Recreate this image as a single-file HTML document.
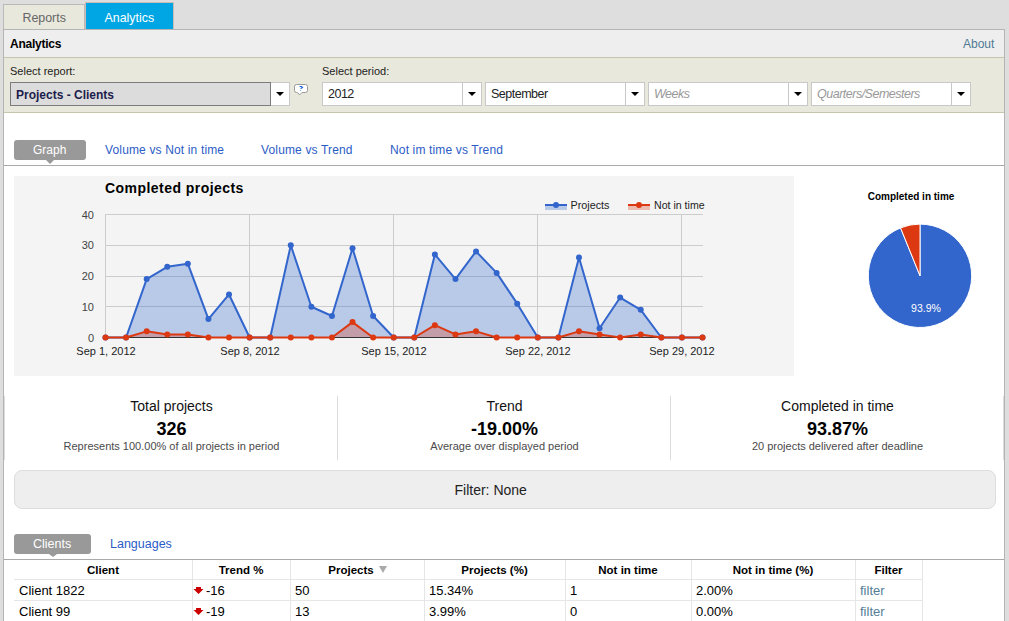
<!DOCTYPE html>
<html><head><meta charset="utf-8">
<style>
html,body{margin:0;padding:0;}
body{width:1009px;height:621px;overflow:hidden;background:#dedede;position:relative;font-family:"Liberation Sans",sans-serif;}
.abs{position:absolute;}
.t{position:absolute;white-space:nowrap;line-height:1;}
</style></head><body>
<!-- tabs -->
<div class="abs" style="left:3px;top:4px;width:80px;height:25px;background:#e8e8dc;border:1px solid #b9b9b9;border-bottom:none;"></div>
<div class="t" style="left:22.5px;top:12px;font-size:12.4px;color:#666;">Reports</div>
<div class="abs" style="left:85px;top:2px;width:87px;height:27px;background:#00a6e3;border:1px solid #cbbcb8;border-bottom:none;"></div>
<div class="t" style="left:104.5px;top:12px;font-size:12.4px;color:#fff;">Analytics</div>
<!-- container -->
<div class="abs" style="left:3px;top:29px;width:1000px;height:600px;background:#fff;border:1px solid #b4b4b4;"></div>
<div class="abs" style="left:4px;top:30px;width:1000px;height:27px;background:#eeeeee;border-bottom:1px solid #c6c6ac;"></div>
<div class="t" style="left:10px;top:38px;font-size:12px;letter-spacing:-0.25px;font-weight:bold;color:#000;">Analytics</div>
<div class="t" style="left:963px;top:38px;font-size:12px;color:#4f7a93;">About</div>
<div class="abs" style="left:4px;top:58px;width:1000px;height:54px;background:#e8e8dc;border-bottom:1px solid #c6c6ac;"></div>
<div class="t" style="left:10px;top:66px;font-size:11px;color:#222;">Select report:</div>
<div class="t" style="left:322px;top:66px;font-size:11px;color:#222;">Select period:</div>
<!-- select report -->
<div class="abs" style="left:10px;top:82px;width:259px;height:22px;background:#dcdcdc;border:1px solid #7c7c7c;"></div>
<div class="t" style="left:16px;top:89px;font-size:12px;font-weight:bold;color:#1c1c4c;">Projects - Clients</div>
<div class="abs" style="left:271px;top:82px;width:18px;height:22px;background:#fff;border:1px solid #c8c8c8;border-left:none;"></div>
<div class="abs" style="left:276px;top:92px;width:0;height:0;border-left:4px solid transparent;border-right:4px solid transparent;border-top:4px solid #000;"></div>
<svg class="abs" style="left:290px;top:80px" width="22" height="20" viewBox="0 0 22 20">
<path d="M6.5,4.5 H15.5 Q17.5,4.5 17.5,6.5 V10.5 Q17.5,12.5 15.5,12.5 H12 L9.5,15 L7.5,12.5 H6.5 Q4.5,12.5 4.5,10.5 V6.5 Q4.5,4.5 6.5,4.5 Z" fill="#fff" stroke="#999" stroke-width="1"/>
<path d="M9.5,6.5 H11.5 L12.5,7.5 L11,8.5 H10.5 M10.5,10.5 V11" stroke="#1a66d8" stroke-width="1.2" fill="none"/>
</svg>
<!-- period selects -->
<div class="abs" style="left:322px;top:82px;width:158px;height:22px;background:#fff;border:1px solid #c8c8c8;"></div><div class="abs" style="left:462px;top:83px;width:1px;height:22px;background:#c8c8c8;"></div><div class="abs" style="left:468px;top:92px;width:0;height:0;border-left:4px solid transparent;border-right:4px solid transparent;border-top:4px solid #000;"></div><div class="t" style="left:328px;top:87.5px;font-size:12.5px;letter-spacing:-0.5px;color:#222;">2012</div>
<div class="abs" style="left:485px;top:82px;width:158px;height:22px;background:#fff;border:1px solid #c8c8c8;"></div><div class="abs" style="left:625px;top:83px;width:1px;height:22px;background:#c8c8c8;"></div><div class="abs" style="left:631px;top:92px;width:0;height:0;border-left:4px solid transparent;border-right:4px solid transparent;border-top:4px solid #000;"></div><div class="t" style="left:491px;top:87.5px;font-size:12.5px;letter-spacing:-0.5px;color:#222;">September</div>
<div class="abs" style="left:648px;top:82px;width:158px;height:22px;background:#fff;border:1px solid #c8c8c8;"></div><div class="abs" style="left:788px;top:83px;width:1px;height:22px;background:#c8c8c8;"></div><div class="abs" style="left:794px;top:92px;width:0;height:0;border-left:4px solid transparent;border-right:4px solid transparent;border-top:4px solid #000;"></div><div class="t" style="left:654px;top:87.5px;font-size:12.5px;letter-spacing:-0.5px;color:#999;font-style:italic;">Weeks</div>
<div class="abs" style="left:811px;top:82px;width:158px;height:22px;background:#fff;border:1px solid #c8c8c8;"></div><div class="abs" style="left:951px;top:83px;width:1px;height:22px;background:#c8c8c8;"></div><div class="abs" style="left:957px;top:92px;width:0;height:0;border-left:4px solid transparent;border-right:4px solid transparent;border-top:4px solid #000;"></div><div class="t" style="left:817px;top:87.5px;font-size:12.5px;letter-spacing:-0.5px;color:#999;font-style:italic;">Quarters/Semesters</div>

<!-- graph tabs -->
<div class="abs" style="left:14px;top:140px;width:72px;height:20px;background:#999;border-radius:3px;"></div>
<div class="abs" style="left:46px;top:160px;width:0;height:0;border-left:4px solid transparent;border-right:4px solid transparent;border-top:4px solid #999;"></div>
<div class="t" style="left:33px;top:144px;font-size:12px;color:#fff;">Graph</div>
<div class="t" style="left:105px;top:144px;font-size:12px;letter-spacing:0.15px;color:#2b5cc6;">Volume vs Not in time</div>
<div class="t" style="left:261px;top:144px;font-size:12px;letter-spacing:0.15px;color:#2b5cc6;">Volume vs Trend</div>
<div class="t" style="left:390px;top:144px;font-size:12px;letter-spacing:0.15px;color:#2b5cc6;">Not im time vs Trend</div>
<div class="abs" style="left:4px;top:165px;width:1000px;height:1px;background:#aaaaaa;"></div>
<svg class="abs" style="left:0;top:0" width="1009" height="400" viewBox="0 0 1009 400">
<rect x="14" y="176" width="780" height="200" fill="#f4f4f4"/>
<g stroke="#cccccc" stroke-width="1" fill="none">
<path d="M105,214.5 H703 M105,245.5 H703 M105,276.5 H703 M105,306.5 H703"/>
<path d="M105.5,214 V338 M249.5,214 V338 M393.5,214 V338 M537.5,214 V338 M681.5,214 V338"/>
</g>
<path d="M105.5,337.5 L126.09,337.5 L146.67,279.07 L167.26,266.77 L187.84,263.7 L208.43,319.05 L229.02,294.45 L249.6,337.5 L270.19,337.5 L290.78,245.25 L311.36,306.75 L331.95,315.98 L352.53,248.32 L373.12,315.98 L393.71,337.5 L414.29,337.5 L434.88,254.47 L455.47,279.07 L476.05,251.4 L496.64,272.93 L517.22,303.68 L537.81,337.5 L558.4,337.5 L578.98,257.55 L599.57,328.27 L620.16,297.52 L640.74,309.82 L661.33,337.5 L681.91,337.5 L702.5,337.5 L702.5,337.5 L105.5,337.5 Z" fill="#3366cc" fill-opacity="0.3"/>
<path d="M105.5,337.5 L126.09,337.5 L146.67,331.35 L167.26,334.43 L187.84,334.43 L208.43,337.5 L229.02,337.5 L249.6,337.5 L270.19,337.5 L290.78,337.5 L311.36,337.5 L331.95,337.5 L352.53,322.12 L373.12,337.5 L393.71,337.5 L414.29,337.5 L434.88,325.2 L455.47,334.43 L476.05,331.35 L496.64,337.5 L517.22,337.5 L537.81,337.5 L558.4,337.5 L578.98,331.35 L599.57,334.43 L620.16,337.5 L640.74,334.43 L661.33,337.5 L681.91,337.5 L702.5,337.5 L702.5,337.5 L105.5,337.5 Z" fill="#dc3912" fill-opacity="0.3"/>
<path d="M105,337.5 H703" stroke="#333" stroke-width="1"/>
<path d="M105.5,337.5 L126.09,337.5 L146.67,279.07 L167.26,266.77 L187.84,263.7 L208.43,319.05 L229.02,294.45 L249.6,337.5 L270.19,337.5 L290.78,245.25 L311.36,306.75 L331.95,315.98 L352.53,248.32 L373.12,315.98 L393.71,337.5 L414.29,337.5 L434.88,254.47 L455.47,279.07 L476.05,251.4 L496.64,272.93 L517.22,303.68 L537.81,337.5 L558.4,337.5 L578.98,257.55 L599.57,328.27 L620.16,297.52 L640.74,309.82 L661.33,337.5 L681.91,337.5 L702.5,337.5" fill="none" stroke="#3366cc" stroke-width="2" stroke-linejoin="round"/>
<g fill="#3366cc"><circle cx="105.5" cy="337.5" r="3"/><circle cx="126.09" cy="337.5" r="3"/><circle cx="146.67" cy="279.07" r="3"/><circle cx="167.26" cy="266.77" r="3"/><circle cx="187.84" cy="263.7" r="3"/><circle cx="208.43" cy="319.05" r="3"/><circle cx="229.02" cy="294.45" r="3"/><circle cx="249.6" cy="337.5" r="3"/><circle cx="270.19" cy="337.5" r="3"/><circle cx="290.78" cy="245.25" r="3"/><circle cx="311.36" cy="306.75" r="3"/><circle cx="331.95" cy="315.98" r="3"/><circle cx="352.53" cy="248.32" r="3"/><circle cx="373.12" cy="315.98" r="3"/><circle cx="393.71" cy="337.5" r="3"/><circle cx="414.29" cy="337.5" r="3"/><circle cx="434.88" cy="254.47" r="3"/><circle cx="455.47" cy="279.07" r="3"/><circle cx="476.05" cy="251.4" r="3"/><circle cx="496.64" cy="272.93" r="3"/><circle cx="517.22" cy="303.68" r="3"/><circle cx="537.81" cy="337.5" r="3"/><circle cx="558.4" cy="337.5" r="3"/><circle cx="578.98" cy="257.55" r="3"/><circle cx="599.57" cy="328.27" r="3"/><circle cx="620.16" cy="297.52" r="3"/><circle cx="640.74" cy="309.82" r="3"/><circle cx="661.33" cy="337.5" r="3"/><circle cx="681.91" cy="337.5" r="3"/><circle cx="702.5" cy="337.5" r="3"/></g>
<path d="M105.5,337.5 L126.09,337.5 L146.67,331.35 L167.26,334.43 L187.84,334.43 L208.43,337.5 L229.02,337.5 L249.6,337.5 L270.19,337.5 L290.78,337.5 L311.36,337.5 L331.95,337.5 L352.53,322.12 L373.12,337.5 L393.71,337.5 L414.29,337.5 L434.88,325.2 L455.47,334.43 L476.05,331.35 L496.64,337.5 L517.22,337.5 L537.81,337.5 L558.4,337.5 L578.98,331.35 L599.57,334.43 L620.16,337.5 L640.74,334.43 L661.33,337.5 L681.91,337.5 L702.5,337.5" fill="none" stroke="#dc3912" stroke-width="2" stroke-linejoin="round"/>
<g fill="#dc3912"><circle cx="105.5" cy="337.5" r="3"/><circle cx="126.09" cy="337.5" r="3"/><circle cx="146.67" cy="331.35" r="3"/><circle cx="167.26" cy="334.43" r="3"/><circle cx="187.84" cy="334.43" r="3"/><circle cx="208.43" cy="337.5" r="3"/><circle cx="229.02" cy="337.5" r="3"/><circle cx="249.6" cy="337.5" r="3"/><circle cx="270.19" cy="337.5" r="3"/><circle cx="290.78" cy="337.5" r="3"/><circle cx="311.36" cy="337.5" r="3"/><circle cx="331.95" cy="337.5" r="3"/><circle cx="352.53" cy="322.12" r="3"/><circle cx="373.12" cy="337.5" r="3"/><circle cx="393.71" cy="337.5" r="3"/><circle cx="414.29" cy="337.5" r="3"/><circle cx="434.88" cy="325.2" r="3"/><circle cx="455.47" cy="334.43" r="3"/><circle cx="476.05" cy="331.35" r="3"/><circle cx="496.64" cy="337.5" r="3"/><circle cx="517.22" cy="337.5" r="3"/><circle cx="537.81" cy="337.5" r="3"/><circle cx="558.4" cy="337.5" r="3"/><circle cx="578.98" cy="331.35" r="3"/><circle cx="599.57" cy="334.43" r="3"/><circle cx="620.16" cy="337.5" r="3"/><circle cx="640.74" cy="334.43" r="3"/><circle cx="661.33" cy="337.5" r="3"/><circle cx="681.91" cy="337.5" r="3"/><circle cx="702.5" cy="337.5" r="3"/></g>
<g font-family="Liberation Sans" font-size="11" fill="#444" text-anchor="end">
<text x="94" y="219">40</text><text x="94" y="249">30</text><text x="94" y="280">20</text><text x="94" y="311">10</text><text x="94" y="342">0</text>
</g>
<g font-family="Liberation Sans" font-size="11" fill="#222" text-anchor="middle">
<text x="106" y="355">Sep 1, 2012</text><text x="250" y="355">Sep 8, 2012</text><text x="394" y="355">Sep 15, 2012</text><text x="538" y="355">Sep 22, 2012</text><text x="682" y="355">Sep 29, 2012</text>
</g>
<text x="105" y="192.5" font-family="Liberation Sans" font-size="14" font-weight="bold" fill="#000" letter-spacing="0.45">Completed projects</text>
<g>
<rect x="545" y="205" width="22" height="5" fill="#3366cc" fill-opacity="0.3"/>
<path d="M545,205 H567" stroke="#3366cc" stroke-width="2"/>
<circle cx="556" cy="205" r="3" fill="#3366cc"/>
<rect x="628" y="205" width="22" height="5" fill="#dc3912" fill-opacity="0.3"/>
<path d="M628,205 H650" stroke="#dc3912" stroke-width="2"/>
<circle cx="639" cy="205" r="3" fill="#dc3912"/>
<text x="570.5" y="209" font-family="Liberation Sans" font-size="10.8" fill="#222">Projects</text>
<text x="654" y="209" font-family="Liberation Sans" font-size="10.6" fill="#222">Not in time</text>
</g>
<text x="911" y="199.5" font-family="Liberation Sans" font-size="10" font-weight="bold" fill="#000" text-anchor="middle">Completed in time</text>
<path d="M920,275.8 L920,224.10000000000002 A51.7,51.7 0 1 1 900.56,227.89 Z" fill="#3366cc" stroke="#fff" stroke-width="1"/>
<path d="M920,275.8 L900.56,227.89 A51.7,51.7 0 0 1 920,224.10000000000002 Z" fill="#dc3912" stroke="#fff" stroke-width="1"/>
<text x="926" y="312" font-family="Liberation Sans" font-size="10.5" fill="#fff" text-anchor="middle">93.9%</text>
</svg>
<!-- summary -->
<div class="abs" style="left:4px;top:396px;width:1px;height:64px;background:#dcdcdc;"></div>
<div class="abs" style="left:1003px;top:396px;width:1px;height:64px;background:#dcdcdc;"></div>
<div class="abs" style="left:337px;top:396px;width:1px;height:64px;background:#dcdcdc;"></div>
<div class="abs" style="left:670px;top:396px;width:1px;height:64px;background:#dcdcdc;"></div>
<div class="t" style="left:5px;width:333px;text-align:center;top:399px;font-size:14px;color:#111;">Total projects</div>
<div class="t" style="left:5px;width:333px;text-align:center;top:420px;font-size:18px;font-weight:bold;color:#000;">326</div>
<div class="t" style="left:5px;width:333px;text-align:center;top:441px;font-size:11px;color:#4a4a4a;">Represents 100.00% of all projects in period</div>
<div class="t" style="left:338px;width:333px;text-align:center;top:399px;font-size:14px;color:#111;">Trend</div>
<div class="t" style="left:338px;width:333px;text-align:center;top:420px;font-size:18px;font-weight:bold;color:#000;">-19.00%</div>
<div class="t" style="left:338px;width:333px;text-align:center;top:441px;font-size:11px;color:#4a4a4a;">Average over displayed period</div>
<div class="t" style="left:671px;width:333px;text-align:center;top:399px;font-size:14px;color:#111;">Completed in time</div>
<div class="t" style="left:671px;width:333px;text-align:center;top:420px;font-size:18px;font-weight:bold;color:#000;">93.87%</div>
<div class="t" style="left:671px;width:333px;text-align:center;top:441px;font-size:11px;color:#4a4a4a;">20 projects delivered after deadline</div>
<!-- filter -->
<div class="abs" style="left:14px;top:470px;width:980px;height:37px;background:#eeeeee;border:1px solid #dddddd;border-radius:8px;"></div>
<div class="t" style="left:454.5px;top:483px;font-size:14px;color:#222;">Filter: None</div>
<!-- bottom tabs -->
<div class="abs" style="left:14px;top:534px;width:77px;height:20px;background:#999;border-radius:3px;"></div>
<div class="abs" style="left:49px;top:554px;width:0;height:0;border-left:4px solid transparent;border-right:4px solid transparent;border-top:3px solid #999;"></div>
<div class="t" style="left:33px;top:538px;font-size:12.5px;color:#fff;">Clients</div>
<div class="t" style="left:110px;top:538px;font-size:12.5px;color:#2b5cc6;">Languages</div>
<div class="abs" style="left:4px;top:559px;width:1000px;height:1px;background:#aaaaaa;"></div>
<div class="abs" style="left:192px;top:560px;width:1px;height:61px;background:#e6e6e6;"></div><div class="abs" style="left:290px;top:560px;width:1px;height:61px;background:#e6e6e6;"></div><div class="abs" style="left:424px;top:560px;width:1px;height:61px;background:#e6e6e6;"></div><div class="abs" style="left:565px;top:560px;width:1px;height:61px;background:#e6e6e6;"></div><div class="abs" style="left:691px;top:560px;width:1px;height:61px;background:#e6e6e6;"></div><div class="abs" style="left:855px;top:560px;width:1px;height:61px;background:#e6e6e6;"></div><div class="abs" style="left:14px;top:579px;width:908px;height:1px;background:#e6e6e6;"></div><div class="abs" style="left:14px;top:600px;width:908px;height:1px;background:#e6e6e6;"></div><div class="abs" style="left:922px;top:560px;width:1px;height:61px;background:#e6e6e6;"></div><div class="t" style="left:14px;width:178px;text-align:center;top:565px;font-size:11.5px;font-weight:bold;color:#000;">Client</div><div class="t" style="left:192px;width:98px;text-align:center;top:565px;font-size:11.5px;font-weight:bold;color:#000;">Trend %</div><div class="t" style="left:290px;width:134px;text-align:center;top:565px;font-size:11.5px;font-weight:bold;color:#000;">Projects<span style='display:inline-block;width:12px'></span></div><div class="t" style="left:424px;width:141px;text-align:center;top:565px;font-size:11.5px;font-weight:bold;color:#000;">Projects (%)</div><div class="t" style="left:565px;width:126px;text-align:center;top:565px;font-size:11.5px;font-weight:bold;color:#000;">Not in time</div><div class="t" style="left:691px;width:164px;text-align:center;top:565px;font-size:11.5px;font-weight:bold;color:#000;">Not in time (%)</div><div class="t" style="left:855px;width:67px;text-align:center;top:565px;font-size:11.5px;font-weight:bold;color:#000;">Filter</div><div class="t" style="left:19px;top:584px;font-size:13px;color:#000;">Client 1822</div><svg class="abs" style="left:193px;top:586px" width="12" height="9" viewBox="0 0 12 9"><path d="M3,1 H8 V3 H10.5 L5.5,8 L0.5,3 H3 Z" fill="#cc0000"/></svg><div class="t" style="left:206px;top:584px;font-size:13px;color:#000;">-16</div><div class="t" style="left:295px;top:584px;font-size:13px;color:#000;">50</div><div class="t" style="left:429px;top:584px;font-size:13px;color:#000;">15.34%</div><div class="t" style="left:570px;top:584px;font-size:13px;color:#000;">1</div><div class="t" style="left:696px;top:584px;font-size:13px;color:#000;">2.00%</div><div class="t" style="left:860px;top:584px;font-size:13px;color:#557d96;">filter</div>
<div class="t" style="left:19px;top:605px;font-size:13px;color:#000;">Client 99</div><svg class="abs" style="left:193px;top:607px" width="12" height="9" viewBox="0 0 12 9"><path d="M3,1 H8 V3 H10.5 L5.5,8 L0.5,3 H3 Z" fill="#cc0000"/></svg><div class="t" style="left:206px;top:605px;font-size:13px;color:#000;">-19</div><div class="t" style="left:295px;top:605px;font-size:13px;color:#000;">13</div><div class="t" style="left:429px;top:605px;font-size:13px;color:#000;">3.99%</div><div class="t" style="left:570px;top:605px;font-size:13px;color:#000;">0</div><div class="t" style="left:696px;top:605px;font-size:13px;color:#000;">0.00%</div><div class="t" style="left:860px;top:605px;font-size:13px;color:#557d96;">filter</div>
<div class="abs" style="left:379px;top:566px;width:0;height:0;border-left:4px solid transparent;border-right:4px solid transparent;border-top:7px solid #aaa;"></div>
</body></html>
